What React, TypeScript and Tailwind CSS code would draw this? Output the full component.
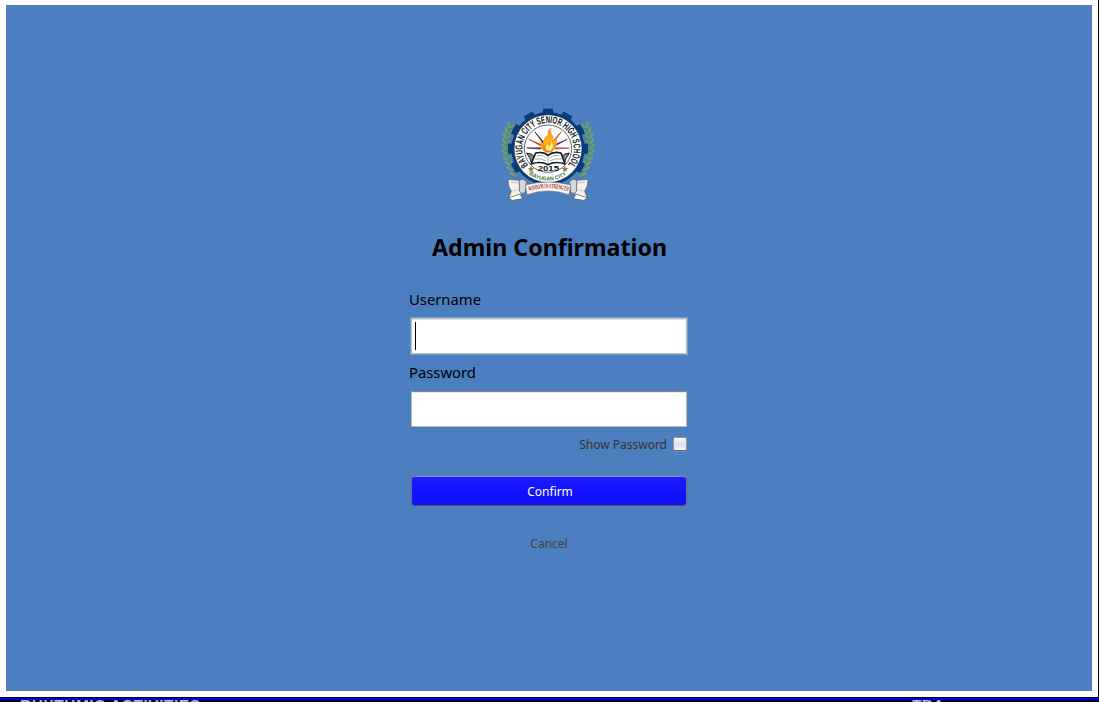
import React from 'react';

const teeth = [0, 30, 60, 90, 120, 240, 270, 300, 330];
const rays = [-88, -64, -38, 38, 64, 88];
const leaves = [0, 1, 2, 3, 4, 5, 6, 7, 8, 9];

function Laurel() {
  return (
    <g>
      <path d="M44 70 Q18 118 30 170 Q38 204 68 228" fill="none" stroke="#4d8548" strokeWidth="3" />
      {leaves.map((i) => {
        const t = i / 9;
        const x = 44 - 66 * t * (1 - t) + 12 * t * t;
        const y = 72 + 142 * t;
        return (
          <g key={i} transform={`translate(${x} ${y}) rotate(${20 - 58 * t})`}>
            <ellipse cx="-5" cy="-4" rx="3" ry="10" transform="rotate(-28)" fill="#629b58" stroke="#a5bb91" strokeWidth="1" />
            <ellipse cx="5" cy="-3" rx="3" ry="9" transform="rotate(28)" fill="#79a866" stroke="#3e744e" strokeWidth="1" />
          </g>
        );
      })}
    </g>
  );
}

function ScrollEnd() {
  return (
    <g stroke="#52565b" strokeWidth="2" strokeLinejoin="round">
      <path d="M36 232 L69 235 L76 280 L36 294 L46 268 L38 252 Z" fill="#f2f2ef" />
      <path d="M69 235 Q85 228 91 239 L88 270 Q78 279 71 269 Z" fill="#d7d8d8" />
      <path d="M38 288 L72 276 L80 290 L49 295 Z" fill="#ffffff" />
      <path d="M44 240 L63 242 M50 267 L70 262" fill="none" stroke="#a8a8a8" />
    </g>
  );
}

function SchoolSeal() {
  return (
    <svg className="size-[104px]" viewBox="0 0 312 312" role="img" aria-label="Bayugan City Senior High School">
      <defs>
        <path id="nameArc" d="M97 189.2 A77 77 0 1 1 215 189.2" />
        <path id="cityArc" d="M99 217 A96 96 0 0 0 213 217" />
        <path id="mottoArc" d="M97 268 Q156 249 217 268" />
        <linearGradient id="flame" x1="0" y1="0" x2="0" y2="1">
          <stop offset="0" stopColor="#f58b20" />
          <stop offset="0.55" stopColor="#ffb516" />
          <stop offset="1" stopColor="#f26f20" />
        </linearGradient>
      </defs>
      <Laurel />
      <g transform="translate(312 0) scale(-1 1)"><Laurel /></g>
      <g fill="#063c79">
        <circle cx="156" cy="140" r="110" />
        {teeth.map((a) => (
          <path key={a} d="M139 38 L141 20 H171 L173 38 Z" transform={`rotate(${a} 156 140)`} />
        ))}
      </g>
      <circle cx="156" cy="140" r="102" fill="#fff" stroke="#142b45" strokeWidth="2" />
      <circle cx="156" cy="140" r="71" fill="#fff" stroke="#101820" strokeWidth="2" />
      {rays.map((a, i) => (
        <path key={a} d="M154 118 L156 76 L158 118 Z" transform={`rotate(${a} 156 140)`} fill={i % 2 ? '#b94338' : '#4a2941'} stroke={i % 2 ? '#b94338' : '#4a2941'} strokeWidth="2" />
      ))}
      <path d="M150 151 Q130 139 135 120 L143 127 Q140 108 157 99 Q152 88 165 78 Q161 92 169 102 Q174 108 170 118 Q183 114 180 107 Q187 128 173 143 Q169 150 161 151 Z" fill="url(#flame)" stroke="#f19531" strokeWidth="2" />
      <path d="M151 144 Q145 135 156 125 L158 134 Q169 127 166 117 Q177 137 163 147 Z" fill="#fff58a" />
      <path d="M92 153 Q109 154 117 166 L107 185 Q105 171 92 153 M220 153 Q203 154 195 166 L205 185 Q207 171 220 153" fill="#858990" stroke="#14191e" strokeWidth="3" />
      <path d="M119 153 Q143 148 156 160 Q172 147 195 153 L207 186 Q178 176 156 188 Q134 176 105 186 Z" fill="#fff" stroke="#111820" strokeWidth="5" strokeLinejoin="round" />
      <path d="M156 161 V185 M122 162 Q142 157 151 168 M191 162 Q172 157 161 168 M117 171 Q138 168 150 177 M196 171 Q174 168 162 177" fill="none" stroke="#777d82" strokeWidth="2" />
      <text className="[font-family:'Liberation_Sans',sans-serif] text-[30px] font-bold" fill="#101820">
        <textPath href="#nameArc" textLength="348" lengthAdjust="spacingAndGlyphs">BAYUGAN CITY SENIOR HIGH SCHOOL</textPath>
      </text>
      <text x="125" y="208" textLength="64" lengthAdjust="spacingAndGlyphs" className="[font-family:'Liberation_Sans',sans-serif] text-[20px] font-bold" fill="#111820">2015</text>
      <text className="[font-family:'Liberation_Sans',sans-serif] text-[16px] font-bold" fill="#356e4c">
        <textPath href="#cityArc" textLength="120" lengthAdjust="spacingAndGlyphs">BAYUGAN CITY</textPath>
      </text>
      <path d="M105 191 l3 7 7 1 -6 4 2 7 -6 -4 -6 4 2 -7 -6 -4 7 -1 Z M207 191 l3 7 7 1 -6 4 2 7 -6 -4 -6 4 2 -7 -6 -4 7 -1 Z" fill="#8e7b3b" />
      <ScrollEnd />
      <g transform="translate(312 0) scale(-1 1)"><ScrollEnd /></g>
      <path d="M88 249 Q156 231 224 249 L219 278 Q156 256 93 278 Z" fill="#f8f7f3" stroke="#77706c" strokeWidth="2" />
      <text className="[font-family:'Liberation_Serif',serif] text-[20px] font-bold" fill="#971f2b">
        <textPath href="#mottoArc" startOffset="2" textLength="119" lengthAdjust="spacingAndGlyphs">WISDOM IN STRENGTH</textPath>
      </text>
    </svg>
  );
}

export default function App() {
  return (
    <div className="flex h-[702px] w-[1099px] flex-col overflow-hidden bg-black [font-family:'Noto_Sans',sans-serif]">
      <div className="h-[697px] shrink-0 border-r border-black">
        <div className="h-full border-x-[6px] border-t-[5px] border-b-[6px] border-white bg-[#4b7fbf]">
          <main className="ml-[405px] flex w-[276px] flex-col pt-[97px]">
            <div className="ml-[85px] h-[104px]"><SchoolSeal /></div>
            <h1 className="-mr-[17px] -ml-4 mt-[25px] h-8 text-center text-[23.2px] leading-8 font-bold whitespace-nowrap text-black">Admin Confirmation</h1>
            <label htmlFor="username" className="-ml-0.5 mt-[24px] h-6 text-[14.8px] leading-6 text-black">Username</label>
            <div className="mt-[7px] flex h-9 items-start border border-[#b9babd] bg-white pt-[3px] pl-[3px] shadow-[0_0_0_1px_#6da0cf,inset_0_1px_1px_#dddce0]">
              <div className="h-7 w-px bg-black" />
              <input id="username" className="h-7 min-w-0 flex-1 outline-none" />
            </div>
            <label htmlFor="password" className="-ml-0.5 mt-[6px] h-6 text-[14.8px] leading-6 text-black">Password</label>
            <input id="password" type="password" className="mt-[7px] h-9 border border-t-[#85878b] border-r-[#b9babd] border-b-[#b9babd] border-l-[#b9babd] bg-white shadow-[inset_0_1px_1px_#e5e6e8] outline-none" />
            <label className="mt-[7px] flex h-5 items-center justify-end gap-[6px] text-[12px] leading-5 text-[#333]">
              <span className="pt-0.5">Show Password</span>
              <span className="h-[14px] w-[14px] rounded-[2px] border border-t-[#999] border-r-[#999] border-b-[#666] border-l-[#999] bg-linear-to-b from-[#f8f8fa] via-[#dedfe5] to-[#f0f0f5] shadow-[0_1px_0_#7e91ac]" />
            </label>
            <button className="mt-[22px] h-[30px] rounded-[4px] border border-t-[#8b8ca5] border-r-[#696b85] border-b-[#515361] border-l-[#696b85] bg-linear-to-b from-[#1c1cff] to-[#1010ff] to-60% pt-0.5 pl-0.5 text-[12px] leading-[26px] text-white shadow-[0_1px_0_#63789b]">Confirm</button>
            <button className="mt-[28px] h-5 self-center text-[12px] leading-5 text-[#444]">Cancel</button>
          </main>
        </div>
      </div>
      <footer className="flex h-[5px] shrink-0 flex-col overflow-hidden bg-black">
        <div className="mt-px h-[2px] shrink-0 bg-[#0000f0]" />
        <div className="-mt-[3px] flex shrink-0 justify-between pr-[155px] pl-[20px] [font-family:'Liberation_Sans',sans-serif] text-[15.4px] leading-[16px] font-bold text-[#b4b4c4]">
          <span className="tracking-[0.58px]">RHYTHMIC ACTIVITIES</span>
          <span>TBA</span>
        </div>
      </footer>
    </div>
  );
}
